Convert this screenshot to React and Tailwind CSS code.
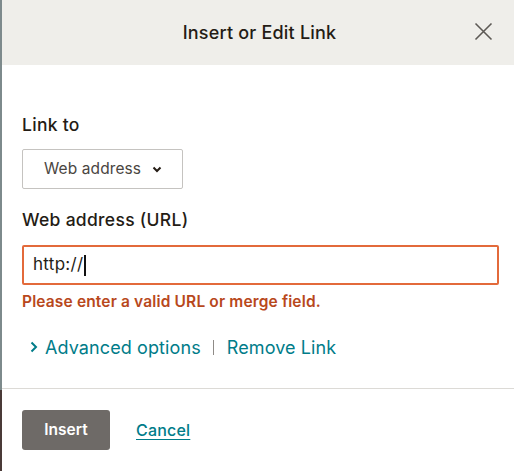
import React from "react";

export default function App() {
  return (
    <div
      className="w-[514px] h-[471px] flex overflow-hidden bg-white"
      style={{ fontFamily: "Inter, 'Open Sans', sans-serif" }}
    >
      <div className="w-[2px] h-full flex flex-col">
        <div className="h-[390px] bg-[#7d8a8c]" />
        <div className="flex-1 bg-[#4a3a38]" />
      </div>
      <div className="flex-1 flex flex-col bg-white rounded-bl-[6px] overflow-hidden">
        <div className="h-[65px] bg-[#efeeea] relative flex items-center justify-center shrink-0">
          <span className="text-[18px] font-medium text-[#241c15] tracking-[0.2px] ml-[3px]">
            Insert or Edit Link
          </span>
          <button className="absolute left-[471px] top-[21px] w-[20px] h-[20px] flex items-center justify-center">
            <svg width="19" height="19" viewBox="0 0 19 19">
              <path d="M1.5 1.5 L17.5 17.5 M17.5 1.5 L1.5 17.5" stroke="#5d5955" strokeWidth="1.6" fill="none" />
            </svg>
          </button>
        </div>
        <div className="pl-[20px] pr-[15px] flex flex-col">
          <div className="mt-[48px] h-[24px] leading-[24px] text-[17.5px] font-medium text-[#241c15] tracking-[0.3px]">
            Link to
          </div>
          <div className="mt-[12px] w-[161px] h-[40px] border border-[#c5c3c0] rounded-[2px] flex items-center pl-[21px]">
            <span className="text-[15.5px] text-[#4a4541] tracking-[0.1px]">Web address</span>
            <svg width="10" height="7" viewBox="0 0 10 7" className="ml-[11px]">
              <path d="M1.5 1.5 L5 5 L8.5 1.5" stroke="#241c15" strokeWidth="2" fill="none" />
            </svg>
          </div>
          <div className="mt-[19px] h-[24px] leading-[24px] text-[17.5px] font-medium text-[#241c15] tracking-[0.3px]">
            Web address (URL)
          </div>
          <div className="mt-[13px] h-[40px] border-2 border-[#e36a3b] rounded-[2px] flex items-center pl-[9px]">
            <span className="text-[17px] text-[#241c15] tracking-[0.3px]">http://</span>
            <span className="w-[2px] h-[21px] bg-[#111] ml-[1px]" />
          </div>
          <div className="mt-[7px] h-[20px] leading-[20px] text-[15.5px] font-semibold text-[#b8481c] tracking-[0.15px]">
            Please enter a valid URL or merge field.
          </div>
          <div className="mt-[23px] h-[24px] flex items-center text-[18px] text-[#007c89] tracking-[0.1px]">
            <svg width="8" height="12" viewBox="0 0 8 12" className="ml-[8px] mr-[7px]">
              <path d="M1.5 1.5 L6 6 L1.5 10.5" stroke="#007c89" strokeWidth="2" fill="none" />
            </svg>
            <span>Advanced options</span>
            <span className="ml-[12px] mr-[13px] w-px h-[15px] bg-[#8f8b87]" />
            <span>Remove Link</span>
          </div>
        </div>
        <div className="mt-[29px] h-px bg-[#dcdad6]" />
        <div className="pl-[20px] mt-[21px] flex items-center">
          <button className="w-[88px] h-[40px] rounded-[3px] bg-[#6e6a67] text-white text-[15.5px] font-semibold">
            Insert
          </button>
          <span className="ml-[26px] text-[16px] text-[#007c89] underline underline-offset-[3px] font-medium tracking-[0.2px]">
            Cancel
          </span>
        </div>
      </div>
    </div>
  );
}
